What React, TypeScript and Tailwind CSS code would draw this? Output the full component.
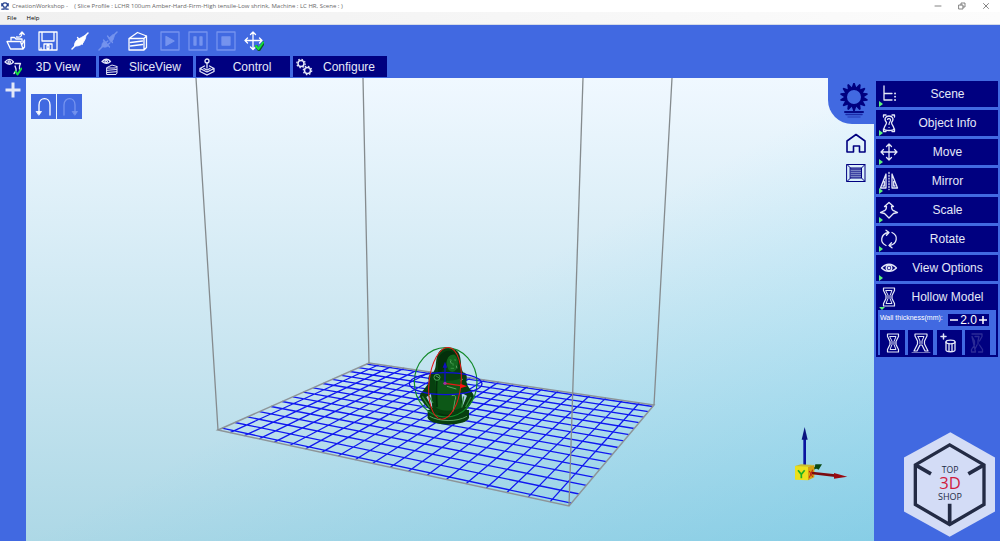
import React, { useState } from 'react';
import { clsx } from 'clsx';

type IconProps = { className?: string };

interface SvgProps extends IconProps {
  box?: string;
  children: React.ReactNode;
}

function Svg({ box = '0 0 20 20', className, children }: SvgProps) {
  return (
    <svg
      viewBox={box}
      className={clsx('shrink-0', className)}
      fill="none"
      stroke="currentColor"
      strokeWidth="1.3"
      strokeLinejoin="round"
      strokeLinecap="round"
      aria-hidden="true"
    >
      {children}
    </svg>
  );
}

const OpenIcon = () => (
  <Svg className="size-5">
    <path d="M5 9V6.500h3.500L10 8h6v2.500M1 10.500h13.500L17 18H4.500zM16 13.500L18.500 9v7L17 18" />
    <path d="M10.500 6c4 .5 5.500-.5 5.500-4.500M13.800 3.500L16 1l2.200 2.500" />
  </Svg>
);

const SaveIcon = () => (
  <Svg className="size-5">
    <path d="M1 1h18v18H1zM4 1v9h12V1M6 19v-6h8v6M9 14.500h2v3H9zM3 19v-2" />
  </Svg>
);

const PlugIcon = () => (
  <Svg className="size-5">
    <path d="M2 18l4-4M13 7l5-5" strokeWidth="1.500" />
    <path d="M4.500 15c-.5-2.500 1.500-6 4-7L13 5.500l3-1.500-.5 3.500-2.500 4.500c-2 2-4.500 3.500-8.500 3z" fill="currentColor" strokeWidth=".8" />
    <path d="M7.500 6.500l5 6.500" />
  </Svg>
);

const UnplugIcon = () => (
  <Svg className="size-5">
    <path d="M1 19l4-4M15 5l4-4" strokeWidth="1.500" />
    <path d="M4 15.500c-.5-2 .5-4 2-5l4 4.500c-2 1.500-4 1.500-6 .5zM11 7l4-3.500 1.500 1-1.500 4.500-2 2z" fill="currentColor" strokeWidth=".8" />
    <path d="M5.500 9l6 7M9.500 5l5 6.500M8 11.500l1.800-1.500M10 13.500l1.800-1.500" />
  </Svg>
);

const SliceIcon = () => (
  <Svg className="size-5">
    <path d="M1 7.500l8.500-6L18.500 5v11.500L16 19H1zM1 7.500h15L18.500 5M16 7.500V19M2.500 11.500l12-1.500M2.500 15l12-1.500" />
  </Svg>
);

const BoxedIcon = ({ children }: { children: React.ReactNode }) => (
  <Svg className="size-5">
    <path d="M1 1h18v18H1z" />
    {children}
  </Svg>
);

const MoveIcon = () => (
  <Svg className="size-5">
    <path d="M10 2v16M2 10h16M7.500 4.500L10 2l2.500 2.500M7.500 15.500L10 18l2.500-2.500M4.500 7.500L2 10l2.500 2.500M15.500 7.500L18 10l-2.500 2.500" />
  </Svg>
);

const MoveCheckIcon = () => (
  <Svg className="size-5">
    <path d="M9 1v17M1 9.500h17M6.500 3.500L9 1l2.500 2.500M6.500 16L9 18.500 11.500 16M3.500 7L1 9.500 3.500 12M15.500 7L18 9.500 15.500 12" />
    <path d="M12.500 15.500l2.500 3.500 4.500-7" stroke="#0b5a2a" strokeWidth="3" />
    <path d="M12 15l2.500 3L19 11.500" stroke="#16e03c" strokeWidth="2" />
  </Svg>
);

const View3DIcon = () => (
  <Svg className="size-[18px]" box="0 0 18 18">
    <path d="M1 4c3-3.500 6-3.500 8.500 0C7 7 4 7 1 4z" />
    <circle cx="5.200" cy="4" r="1.200" />
    <path d="M11 5.500h5.500l-1 2.500v3M11 8l1 3v2l-2 2.500" />
    <path d="M11.500 13.500l2 3 4-6" stroke="#16e03c" strokeWidth="2" />
  </Svg>
);

const SliceViewIcon = () => (
  <Svg className="size-[18px]" box="0 0 18 18">
    <path d="M1 3.500c3-3 6-3 8.500 0-2.500 2.500-5.500 2.500-8.500 0z" />
    <circle cx="5.200" cy="3.500" r="1.200" />
    <path d="M6 9.500l5-2.500 5 1.500v6.500l-1 1.500H6zM6 10h8.500l1.500-1.500M6 12.300l9.500-.8M6 14.500l9.500-.8" strokeWidth="1" />
  </Svg>
);

const JoystickIcon = () => (
  <Svg className="size-[18px]" box="0 0 18 18">
    <circle cx="9" cy="3" r="2" />
    <path d="M9 5v5M6.500 8L2 10.500 9 14l7-3.500L11.500 8M2 10.500v3L9 17l7-3.500v-3M6 10.500l3 1.500 3-1.500" />
  </Svg>
);

const GearsIcon = () => (
  <Svg className="size-[18px]" box="0 0 18 18">
    <circle cx="6" cy="5.500" r="3" strokeWidth="1.500" />
    <circle cx="6" cy="5.500" r="4.200" strokeWidth="1.300" strokeDasharray="1.500 1.800" strokeLinecap="butt" />
    <circle cx="12.500" cy="12.500" r="3" strokeWidth="1.500" />
    <circle cx="12.500" cy="12.500" r="4.200" strokeWidth="1.300" strokeDasharray="1.500 1.800" strokeLinecap="butt" />
  </Svg>
);

const SceneIcon = () => (
  <Svg className="size-5">
    <path d="M5 2v14h8M5 9.500h8" />
    <path d="M16 9.500h.1M16 16h.1M16 12.700h.1" strokeWidth="1.800" />
  </Svg>
);

const ObjectIcon = () => (
  <Svg className="size-5">
    <path d="M4.500 4V2h2.500M13 2h2.500v2M4.500 16v2.500H7M13 18.500h2.500V16" />
    <path d="M7.500 9.500C4.500 6 6.500 3 10 3s5.500 3 2.500 6.500c0 2.500 2.500 3.500 2.500 6.500-1 2-9 2-10 0 0-3 2.500-4 2.500-6.500z" />
    <path d="M8.500 6.500c.5-1.500 3.500-1 3 1-.3 1.500-1.500 2-1.500 4M10 14.500h.1" strokeWidth="1.200" />
  </Svg>
);

const MirrorIcon = () => (
  <Svg className="size-5">
    <path d="M7 3v14H1.500zM13 3v14h5.500zM5.300 10.500V15H4M14.700 10.500V15H16" />
    <path d="M10 1.500v17" strokeDasharray="1 1.800" />
  </Svg>
);

const ScaleIcon = () => (
  <Svg className="size-5">
    <path d="M10 2.500L5.500 6.500h2c0 2.500-1 4-3 4.500L1.500 12.500l4 1L10 18l4.500-4.500 4-1-3-1.500c-2-.5-3-2-3-4.500h2z" />
  </Svg>
);

const RotateIcon = () => (
  <Svg className="size-5">
    <path d="M7 16.500C.5 13.500 1.500 5 9.500 3.500M13 3.500c6.500 3 5.500 11.500-2.500 13" />
    <path d="M7 1.200l3 2.300-2.500 2.800M13 18.800l-3-2.300 2.500-2.800" />
  </Svg>
);

const EyeIcon = () => (
  <Svg className="size-5">
    <path d="M2.500 10c4.500-5 10.500-5 15 0-4.500 4.500-10.500 4.500-15 0z" />
    <circle cx="10" cy="10" r="2.800" />
    <circle cx="10" cy="10" r=".8" />
  </Svg>
);

const HollowIcon = () => (
  <Svg className="size-5">
    <path d="M4.500 1h11v2.500L13 8.500v3l2.500 5V19h-11v-2.500l2.500-5v-3l-2.500-5z" strokeWidth="1.200" />
    <path d="M7 3.500h6L11 8.500v3l2 5H7l2-5v-3z" strokeWidth="1" />
  </Svg>
);

const HollowOpenIcon = () => (
  <Svg className="size-5">
    <path d="M4 1h12v2l-2.500 5v3l3.500 7h-3l-3-6H9l-3 6H3l3.500-7V8L4 3z" strokeWidth="1.200" />
    <path d="M7 3.500h6L11 8v2.500M9 10.500V8L7 3.500" strokeWidth="1" />
    <path d="M1 19.500h18" strokeWidth=".8" opacity=".6" />
  </Svg>
);

const DrainIcon = () => (
  <Svg className="size-5">
    <path d="M4.500 1v5M2 3.500h5" strokeWidth="1.500" />
    <ellipse cx="11.500" cy="9" rx="4.500" ry="1.800" />
    <path d="M7 9v8c0 2.300 9 2.300 9 0V9M10 11.500V18M13 11.500V18" />
  </Svg>
);

const HollowOffIcon = () => (
  <Svg className="size-5">
    <path d="M5 1h10v2.500L12.500 8M12.500 12l3 4.500V19h-4M8.500 19h-4v-2.500l3-4.500V8L5 3.500zM8 3.500h4L11 8v3M8 16l2-4" />
  </Svg>
);

const TOOLS = [
  { label: 'Open', icon: <OpenIcon />, width: 'w-8', dim: false },
  { label: 'Save', icon: <SaveIcon />, width: 'w-8', dim: false },
  { label: 'Connect', icon: <PlugIcon />, width: 'w-8', dim: false },
  { label: 'Disconnect', icon: <UnplugIcon />, width: 'w-6', dim: true },
  { label: 'Slice', icon: <SliceIcon />, width: 'w-9', dim: false },
  { label: 'Play', icon: <BoxedIcon><path d="M6 5.500v9l8-4.500z" fill="currentColor" /></BoxedIcon>, width: 'w-7', dim: true },
  { label: 'Pause', icon: <BoxedIcon><path d="M6 6h2v8H6zM12 6h2v8h-2z" fill="currentColor" /></BoxedIcon>, width: 'w-7', dim: true },
  { label: 'Stop', icon: <BoxedIcon><path d="M6 6h8v8H6z" fill="currentColor" /></BoxedIcon>, width: 'w-7', dim: true },
  { label: 'Arrange', icon: <MoveCheckIcon />, width: 'w-7', dim: false },
];

const TABS = [
  { label: '3D View', icon: View3DIcon },
  { label: 'SliceView', icon: SliceViewIcon },
  { label: 'Control', icon: JoystickIcon },
  { label: 'Configure', icon: GearsIcon },
];

const PANELS = [
  { label: 'Scene', icon: SceneIcon },
  { label: 'Object Info', icon: ObjectIcon },
  { label: 'Move', icon: MoveIcon },
  { label: 'Mirror', icon: MirrorIcon },
  { label: 'Scale', icon: ScaleIcon },
  { label: 'Rotate', icon: RotateIcon },
  { label: 'View Options', icon: EyeIcon },
  { label: 'Hollow Model', icon: HollowIcon, open: true },
];

const HOLLOW_ACTIONS = [
  { label: 'Hollow', icon: HollowIcon, dim: false },
  { label: 'Hollow with open base', icon: HollowOpenIcon, dim: false },
  { label: 'Add drain hole', icon: DrainIcon, dim: false },
  { label: 'Undo hollow', icon: HollowOffIcon, dim: true },
];

// Corners of the build plate on screen: left, front, right, back
const PLATE = [[218, 430], [569, 506], [654, 405], [369, 363]];

// Projective map from the unit square to the plate
function project(u: number, v: number) {
  const [[x0, y0], [x1, y1], [x2, y2], [x3, y3]] = PLATE;
  const dx1 = x1 - x2, dx2 = x3 - x2, sx = x0 - x1 + x2 - x3;
  const dy1 = y1 - y2, dy2 = y3 - y2, sy = y0 - y1 + y2 - y3;
  const den = dx1 * dy2 - dx2 * dy1;
  const g = (sx * dy2 - dx2 * sy) / den;
  const h = (dx1 * sy - sx * dy1) / den;
  const w = g * u + h * v + 1;
  const x = ((x1 - x0 + g * x1) * u + (x3 - x0 + h * x3) * v + x0) / w;
  const y = ((y1 - y0 + g * y1) * u + (y3 - y0 + h * y3) * v + y0) / w;
  return `${x.toFixed(1)} ${y.toFixed(1)}`;
}

function gridPath() {
  const lines: string[] = [];
  for (let i = 0; i < 19; i++) {
    const u = (0.85 + i) / 19.7;
    lines.push(`M${project(u, 0)}L${project(u, 1)}`);
  }
  for (let i = 0; i < 15; i++) {
    const v = (0.3 + i) / 14.6;
    lines.push(`M${project(0, v)}L${project(1, v)}`);
  }
  return lines.join('');
}

// Pointed cog outline with a round hole
function gearPath(teeth: number, outer: number, inner: number, hole: number) {
  const points: string[] = [];
  for (let i = 0; i < teeth; i++) {
    [[-0.5, inner], [-0.12, outer], [0.12, outer]].forEach(([shift, r]) => {
      const a = ((i + shift) / teeth) * Math.PI * 2 - Math.PI / 2;
      points.push(`${(15 + r * Math.cos(a)).toFixed(2)} ${(15 + r * Math.sin(a)).toFixed(2)}`);
    });
  }
  return `M${points.join('L')}ZM${15 - hole} 15a${hole} ${hole} 0 1 0 ${hole * 2} 0a${hole} ${hole} 0 1 0 ${-hole * 2} 0Z`;
}

function Statue() {
  return (
    <g transform="translate(395 335) scale(.3333)" fill="none">
      <g fill="#07400f">
        <ellipse cx="160" cy="247" rx="62" ry="22" />
        <path d="M98 225h124v22H98z" />
        <path d="M128 60c6-28 56-30 66 0 6 20 2 36 10 52 14 2 12 18 10 26 2 18 14 24 22 42 2 16-14 34-24 48l-100 2c-16-12-34-32-38-48 6-14 20-24 28-42-6-16 4-26 14-30 10-14 4-32 12-50z" />
      </g>
      <path d="M94 186l18 34-4-44zM216 182l-14 34-2-42z" fill="#aacfe6" />
      <path d="M120 130c10 10 60 10 76 0l2 88c-20 12-60 12-74 0z" fill="#0d5817" />
      <ellipse cx="172" cy="84" rx="17" ry="27" fill="#12661e" />
      <path d="M132 66c12-20 34-26 50-8-16 0-26 6-30 30-4 18-14 26-24 26 4-18-2-30 4-48z" fill="#032f0b" />
      <path d="M164 74l6 3m8-3l5 2m-10 8l2 8m-8 8h10M100 180l14 24M206 184l-6 34M82 184l22 34M228 186l-16 30" stroke="#2f8a3c" strokeWidth="4" />
      <path d="M170 182c12-4 14 4 10 14l-6 34M166 78l3 8M184 92l2 8M156 154l28 8M122 122l12 8M204 132l-8 6M104 244c30 16 80 18 112 0" stroke="#5aa564" strokeWidth="3" />
      <path d="M130 236c20 8 44 8 66 0M126 134c-4 30 0 60 0 82" stroke="#032f0b" strokeWidth="5" />
      <circle cx="126" cy="127" r="9" stroke="#4aa056" strokeWidth="3" />
      <ellipse cx="152" cy="142" rx="94" ry="104" stroke="#138a2a" strokeWidth="3.500" />
      <ellipse cx="152" cy="146" rx="109" ry="33" stroke="#1010e0" strokeWidth="4" />
      <ellipse cx="150" cy="145" rx="48" ry="108" stroke="#e81818" strokeWidth="3" transform="rotate(6 150 145)" />
      <path d="M150 145V92" stroke="#1010c0" strokeWidth="4" />
      <path d="M150 80l-7 18h14z" fill="#1010c0" />
      <path d="M150 145l48 7" stroke="#e81818" strokeWidth="4" />
      <path d="M216 154l-20-8v14z" fill="#ff1010" />
      <circle cx="150" cy="145" r="5" fill="#a030a0" />
    </g>
  );
}

function AxisGizmo() {
  return (
    <g transform="translate(780 415) scale(.3333)">
      <path d="M74 152V70" stroke="#0a14a0" strokeWidth="8" />
      <path d="M74 36l-9 38h18z" fill="#0a1480" />
      <path d="M98 162l14-6" stroke="#0c4a14" strokeWidth="6" />
      <path d="M126 148h-20l-2 10 12 6z" fill="#0c4a14" />
      <path d="M45 153h39v43l-39-2z" fill="#ece01c" />
      <path d="M45 153l18-5 40 2-19 5z" fill="#c9bd30" />
      <path d="M84 155l19-5v37l-19 9z" fill="#d6a012" />
      <path d="M54 166l10 12 10-12M64 178v12" fill="none" stroke="#20b020" strokeWidth="5" />
      <path d="M88 168l10 18M98 164l-10 24" stroke="#c01818" strokeWidth="3" />
      <path d="M96 174l70 8" stroke="#7a0a10" strokeWidth="8" />
      <path d="M202 185l-40-11v17z" fill="#9a0a10" />
    </g>
  );
}

function Viewport() {
  return (
    <main className="relative min-w-0 flex-1 bg-[linear-gradient(to_bottom_right,#fff_50%,#c7f3ff),linear-gradient(#f0f8ff,#add8e6)] bg-blend-multiply">
      <svg
        viewBox="26 78 848 463"
        preserveAspectRatio="xMidYMid slice"
        className="absolute inset-0 size-full"
        role="img"
        aria-label="Build volume"
      >
        <path d={gridPath()} stroke="#1018f0" strokeWidth="1.300" fill="none" />
        <path d="M218 430L369 363 654 405 569 506z" stroke="#8d9498" strokeWidth="1.500" fill="none" />
        <path d="M196 78L218 430M363 78L369 363M672 78L654 405" stroke="#858b8e" strokeWidth="1.300" />
        <Statue />
        <path d="M583 78L569 506" stroke="#858b8e" strokeWidth="1.300" />
        <AxisGizmo />
      </svg>

      <div className="absolute top-4 left-[5px] flex gap-px text-white">
        <button aria-label="Undo" className="flex size-[25px] items-center justify-center bg-[#4169e1]">
          <Svg className="size-5">
            <path d="M5 15V8c0-8.500 11-8.500 11 0v10" />
            <path d="M2.500 14.500h5L5 18z" fill="currentColor" strokeWidth=".8" />
          </Svg>
        </button>
        <button aria-label="Redo" className="flex size-[25px] items-center justify-center bg-[#4169e1] text-[#7593ee]">
          <Svg className="size-5">
            <path d="M15 15V8C15-.5 4-.5 4 8v10" />
            <path d="M12.500 14.500h5L15 18z" fill="currentColor" strokeWidth=".8" />
          </Svg>
        </button>
      </div>

      <div className="absolute top-0 right-0 flex flex-col items-end text-[#000080]">
        <button aria-label="Settings" className="flex h-[46px] w-[46px] justify-center rounded-bl-3xl bg-[#4169e1] pt-1 pl-1.5">
          <Svg box="0 0 30 38" className="h-[38px] w-[30px]">
            <path d={gearPath(14, 14, 10, 7)} fill="currentColor" fillRule="evenodd" stroke="none" />
            <path d="M6 30h18" strokeWidth="2" opacity=".9" />
            <path d="M7 32.500h16" strokeWidth="1.500" opacity=".6" />
            <path d="M9 35h12" strokeWidth="1.500" opacity=".3" />
          </Svg>
        </button>
        <button aria-label="Home view" className="mt-2 mr-2 flex h-[22px] items-center">
          <Svg className="size-5">
            <path d="M1 8l9-6.500L19 8v11h-5.500v-6h-6v6H1z" strokeWidth="1.600" />
          </Svg>
        </button>
        <button aria-label="Perspective" className="mt-2 mr-2 flex h-[22px] items-center">
          <Svg className="size-5">
            <path d="M1 1.500h18v17H1zM4.500 5h11v10h-11zM1 1.500L4.500 5M19 1.500L15.500 5M1 18.500L4.500 15M19 18.500L15.500 15" strokeWidth="1" />
            <path d="M4.500 5h11v10h-11z" fill="currentColor" fillOpacity=".45" stroke="none" />
            <path d="M5 6.500h10M5 8.500h10M5 10.500h10M5 12.500h10" strokeWidth=".5" />
          </Svg>
        </button>
      </div>
    </main>
  );
}

function Logo() {
  return (
    <svg viewBox="373 52 273 314" className="h-[105px] w-[91px]" role="img" aria-label="Top 3D Shop">
      <path d="M512 52l134 76v162l-136 76-137-76V128z" fill="#d3dcf6" />
      <path d="M510 90l103 60v119l-103 60-103-60V150z" fill="none" stroke="#232b45" strokeWidth="10" />
      <path d="M407 150l47 27M613 150l-47 27M510 329v-62" stroke="#232b45" strokeWidth="11" />
      <g fontFamily="'Open Sans', sans-serif" textAnchor="middle">
        <text x="511" y="176" fontSize="26" fill="#232b45">TOP</text>
        <text x="511" y="224" fontSize="50" fill="#d01c3f">3D</text>
        <text x="511" y="255" fontSize="27" fill="#232b45">SHOP</text>
      </g>
    </svg>
  );
}

function Sidebar() {
  const [thickness, setThickness] = useState(2);

  return (
    <aside className="flex w-[126px] shrink-0 flex-col px-0.5 pt-[3px]">
      <div className="flex flex-col gap-[3px]">
        {PANELS.map(({ label, icon: Icon, open }) => (
          <button key={label} className="relative flex h-[26px] items-center bg-[#000080] pr-0.5 pl-[3px] text-[#e4e8f8]">
            <Icon />
            <span className="flex-1 text-center text-xs">{label}</span>
            <svg viewBox="0 0 6 6" className="absolute bottom-0 left-[3px] size-1.5" aria-hidden="true">
              <path d={open ? 'M0 3h6L3 6z' : 'M0 0l4 3-4 3z'} fill="#5cf57a" />
            </svg>
          </button>
        ))}
      </div>

      <section className="border-x-2 border-b-2 border-[#000080] pt-1">
        <div className="flex items-start justify-between pr-[7px] pl-0.5 text-white">
          <label htmlFor="wall" className="text-[7px] leading-[8px] whitespace-nowrap">Wall thickness(mm):</label>
          <div className="flex h-3 w-[41px] items-center justify-between bg-[#000080] px-0.5">
            <button aria-label="Decrease" onClick={() => setThickness(t => Math.max(0.5, t - 0.5))}>
              <Svg box="0 0 8 8" className="size-2"><path d="M0 4h8" strokeWidth="1.500" /></Svg>
            </button>
            <input
              id="wall"
              readOnly
              value={thickness.toFixed(1)}
              className="w-5 bg-transparent text-center text-xs leading-3 outline-none"
            />
            <button aria-label="Increase" onClick={() => setThickness(t => t + 0.5)}>
              <Svg box="0 0 8 8" className="size-2"><path d="M0 4h8M4 0v8" strokeWidth="1.500" /></Svg>
            </button>
          </div>
        </div>
        <div className="mt-1 flex justify-between pr-1.5 pl-0.5">
          {HOLLOW_ACTIONS.map(({ label, icon: Icon, dim }) => (
            <button
              key={label}
              aria-label={label}
              className={clsx('flex size-[25px] items-center justify-center bg-[#000080]', dim ? 'text-[#2b2b96]' : 'text-[#e4e8f8]')}
            >
              <Icon />
            </button>
          ))}
        </div>
      </section>

      <div className="mt-auto mb-1 flex justify-end pr-[3px]">
        <Logo />
      </div>
    </aside>
  );
}

export default function App() {
  return (
    <div className="flex min-h-screen flex-col bg-[#4169e1] font-['Liberation_Sans',Arial,sans-serif]">
      <header className="bg-white font-['Open_Sans',sans-serif]">
        <div className="flex h-3 items-center text-[6px] text-[#666]">
          <Svg box="0 0 10 10" className="mr-[3px] ml-px size-2 text-[#24408f]">
            <path d="M3 6C1 2 3 1 5 1s4 1 2 5M1 9h3V6M9 9H6V6M1 2v3M9 2v3" strokeWidth="1.500" />
          </Svg>
          <h1 className="whitespace-pre">CreationWorkshop -    ( Slice Profile : LCHR 100um Amber-Hard-Firm-High tensile-Low shrink, Machine : LC HR, Scene : )</h1>
          <div className="ml-auto flex items-center gap-4 pr-2.5">
            <button aria-label="Minimize"><Svg box="0 0 8 8" className="size-2"><path d="M1 4h6" strokeWidth=".8" /></Svg></button>
            <button aria-label="Restore"><Svg box="0 0 8 8" className="size-2"><path d="M1 3h4v4H1zM3 3V1h4v4H5" strokeWidth=".8" /></Svg></button>
            <button aria-label="Close"><Svg box="0 0 8 8" className="size-2"><path d="M1.500 1.500l5 5M6.500 1.500l-5 5" strokeWidth=".8" /></Svg></button>
          </div>
        </div>
        <nav className="flex h-[13px] items-center gap-2.5 border-b border-[#d5dbe8] bg-linear-to-r from-[#f0f0f0] to-[#fcfcfc] pl-[7px] text-[6px] text-black">
          <button>File</button>
          <button>Help</button>
        </nav>
      </header>

      <div className="flex h-[31px] items-center text-white">
        {TOOLS.map(tool => (
          <button
            key={tool.label}
            aria-label={tool.label}
            className={clsx('flex justify-center', tool.width, tool.dim && 'text-[#7593ee]')}
          >
            {tool.icon}
          </button>
        ))}
      </div>

      <nav className="flex h-[22px] gap-[3px] pb-px pl-0.5">
        {TABS.map(({ label, icon: Icon }) => (
          <button key={label} className="flex w-[94px] items-center bg-[#000080] pr-0.5 pl-0.5 text-[#e4e8f8]">
            <Icon />
            <span className="flex-1 text-center text-xs">{label}</span>
          </button>
        ))}
      </nav>

      <div className="flex flex-1">
        <div className="flex w-[26px] shrink-0 justify-center pt-1">
          <button aria-label="Add model" className="h-4 text-[#e4e8f8]">
            <Svg box="0 0 16 16" className="size-4"><path d="M8 .5v15M.5 8h15" strokeWidth="3" strokeLinecap="butt" /></Svg>
          </button>
        </div>
        <Viewport />
        <Sidebar />
      </div>
    </div>
  );
}
